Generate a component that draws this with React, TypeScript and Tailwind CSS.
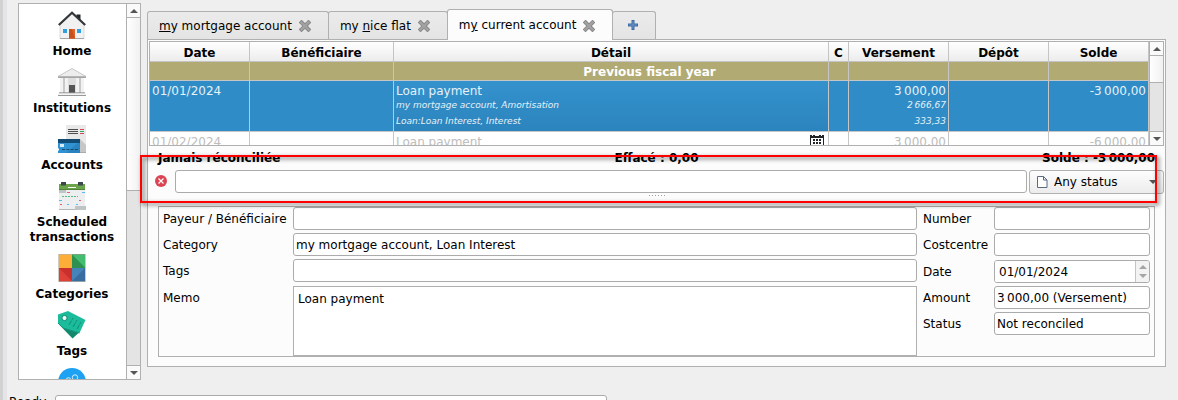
import type { ReactNode } from 'react';

const line = 'border-[#b0b0b0]';
const field =
  'block h-[23px] w-full min-w-0 rounded-[3px] border border-[#ababab] bg-white px-[2px] text-[12px] leading-[15px] text-black outline-none';

function HomeIcon() {
  return (
    <svg width="28" height="28" viewBox="0 0 28 28">
      <path d="M18.500 3.500h4v8h-4z" fill="#232629" />
      <path d="M2 13 14 2l12 11v14.500H2z" fill="#f1f1f1" stroke="#c8c8c8" strokeWidth=".6" />
      <path d="M2 27.500h24" stroke="#a5a5a5" />
      <path d="M.8 14 14 1.800 27.200 14" fill="none" stroke="#33373a" strokeWidth="2.200" />
      <path d="M5 18h4v4H5zM19 18h4v4h-4z" fill="#2f9fe0" />
      <path d="M11 18h6v9.500h-6z" fill="#e0652a" />
      <path d="M11 18h3l3 9.500h-6z" fill="#c9501c" />
    </svg>
  );
}

function BankIcon() {
  return (
    <svg width="28" height="28" viewBox="0 0 28 28">
      <path d="M2 9h24v16H2z" fill="#c9c9c9" />
      <path d="M0 8.500 14 .5l14 8z" fill="#ededed" stroke="#bdbdbd" strokeWidth=".8" />
      <path d="M0 8.500h28v1.500H0z" fill="#a6a6a6" />
      <path d="M2 10h3v15H2zM7 10h3v15H7zM18 10h3v15h-3zM23 10h3v15h-3z" fill="#f2f2f2" />
      <path d="M10 10h8v15h-8z" fill="#dedede" />
      <path d="M11 17h6v8h-6z" fill="#555" />
      <path d="M0 25h28v3H0z" fill="#f4f4f4" />
      <path d="M0 27.500h28M1 24.800h26" stroke="#8d8d8d" strokeWidth=".9" />
    </svg>
  );
}

function AccountsIcon() {
  return (
    <svg width="28" height="28" viewBox="0 0 28 28">
      <path d="M8 0h20v28H8z" fill="#e9e9e9" />
      <path d="M22 14 28 20v8h-6z" fill="#c6c6c6" />
      <path d="M8 27.500h20" stroke="#aaa" />
      <path d="M10 4.500h10M10 6.500h10M10 8.500h10" stroke="#4d4d4d" />
      <path d="M22 4.500h4M22 8.500h4" stroke="#da4453" />
      <path d="M22 6.500h4" stroke="#27ae60" />
      <path d="M0 14h22v14H0z" fill="#2f93d3" />
      <path d="M8 28 22 16v12z" fill="#2a82bf" />
      <path d="M0 14h22v4H0z" fill="#124a73" />
      <path d="M2 19h4v3H2z" fill="#d7eaf5" />
      <path d="M4 24.500h16" stroke="#124a73" strokeDasharray="3 1.300" />
      <path d="M0 23.500v2" stroke="#fff" strokeWidth="2" />
    </svg>
  );
}

function ScheduleIcon() {
  return (
    <svg width="28" height="28" viewBox="0 0 28 28">
      <path d="M1 6h26v22H1z" fill="#eceeef" />
      <path d="M1 27.500h26" stroke="#b5b7b8" />
      <path d="M1 2h26v6H1z" fill="#6ba44b" />
      <path d="M1 7.500h26" stroke="#4f8436" />
      <path d="M10 5.500h8" stroke="#f4f9f1" />
      <path d="M3 0h5v3.500H3zM20 0h5v3.500h-5z" fill="#3c464d" />
      <path d="M1 8h7v3H1zM17 24h11v4H17z" fill="#bfc4c7" />
      <path d="M9 10.500h3M21 18.500h2M2 22.500h2" stroke="#e4606c" />
      <path d="M4 14.500h16" stroke="#51bd80" strokeDasharray="2 1" />
      <path d="M24 10.500h3M1 18.500h3M9 22.500h2M18 22.500h2" stroke="#5bb9ef" />
    </svg>
  );
}

function CategoriesIcon() {
  return (
    <svg width="28" height="28" viewBox="0 0 28 28">
      <path d="M1 .5h13v14H1z" fill="#fdae38" />
      <path d="M14 .5h13v14H14z" fill="#2f9150" />
      <path d="M14 .5h13v13z" fill="#45bd70" />
      <path d="M1 14h13v13.500H1z" fill="#c9302c" />
      <path d="M1 14 14 27H1z" fill="#dd4138" />
      <path d="M14 14h13v13.500H14z" fill="#386da0" />
      <path d="M14 14h13L14 27z" fill="#4484bb" />
      <path d="M.5.500h27v27H.5z" fill="none" stroke="#8a7a60" strokeOpacity=".4" />
    </svg>
  );
}

function TagsIcon() {
  return (
    <svg width="28" height="28" viewBox="0 0 28 28">
      <path d="M1 13.500 5 16l16 5.500-6.500 6z" fill="#12896d" />
      <path d="M0 3.500 10 0l17.500 9-6 13L5 17 0 12z" fill="#1abc9c" />
      <path d="m0 12 5 5 16.500 5" fill="none" stroke="#14967b" />
      <circle cx="6.500" cy="7" r="2.600" fill="#eefaf7" stroke="#12896d" />
      <path d="m11 14 4-7M15 16l4-7M19 18l4-7" stroke="#108068" strokeWidth=".8" strokeDasharray="5 1" />
    </svg>
  );
}

function PayeesIcon() {
  return (
    <svg width="28" height="28" viewBox="0 0 28 28">
      <circle cx="14" cy="14" r="14" fill="#1da1f2" />
      <circle cx="17" cy="9.500" r="2.700" fill="none" stroke="#d8f0ff" />
      <circle cx="10.500" cy="12" r="2.300" fill="none" stroke="#d8f0ff" />
      <path d="M12 18c0-4 10-6 11 0" fill="none" stroke="#d8f0ff" />
    </svg>
  );
}

function Arrow({ up = false, color = '#555' }: { up?: boolean; color?: string }) {
  return (
    <svg width="8" height="4" viewBox="0 0 8 4" className="shrink-0">
      <path d={up ? 'M0 4 4 0l4 4z' : 'M0 0h8L4 4z'} fill={color} />
    </svg>
  );
}

function ScrollBar({ thumb }: { thumb: string }) {
  return (
    <div className={`flex w-[14px] shrink-0 flex-col border-l bg-[#e4e4e4] ${line}`}>
      <button aria-label="Scroll up" className={`flex h-[14px] shrink-0 items-center justify-center border-b bg-[#fafafa] ${line}`}>
        <Arrow up />
      </button>
      <div className={`border-b bg-linear-to-r from-white to-[#f1f1f1] ${thumb} ${line}`} />
      <div className="flex-1" />
      <button aria-label="Scroll down" className={`flex h-[14px] shrink-0 items-center justify-center border-t bg-[#fafafa] ${line}`}>
        <Arrow />
      </button>
    </div>
  );
}

const views: { label: string; icon: ReactNode }[] = [
  { label: 'Home', icon: <HomeIcon /> },
  { label: 'Institutions', icon: <BankIcon /> },
  { label: 'Accounts', icon: <AccountsIcon /> },
  { label: 'Scheduled transactions', icon: <ScheduleIcon /> },
  { label: 'Categories', icon: <CategoriesIcon /> },
  { label: 'Tags', icon: <TagsIcon /> },
];

function Sidebar() {
  return (
    <nav className={`flex h-[377px] w-[123px] shrink-0 overflow-hidden border bg-white ${line}`}>
      <div className="flex min-w-0 flex-1 flex-col gap-[9px] pt-[7px] pr-px">
        {views.map((v) => (
          <button key={v.label} className="flex shrink-0 flex-col items-center gap-[5px] text-center font-bold">
            {v.icon}
            <span>{v.label}</span>
          </button>
        ))}
        <button aria-label="Payees" className="flex shrink-0 justify-center">
          <PayeesIcon />
        </button>
      </div>
      <ScrollBar thumb="h-[173px]" />
    </nav>
  );
}

function Tab({ children, active = false }: { children: ReactNode; active?: boolean }) {
  return (
    <div
      className={`-ml-px flex items-center gap-[7px] rounded-t-[3px] border border-b-0 pr-[17px] pl-[11px] ${line} ${
        active ? 'relative -mb-px h-[31px] bg-[#fcfcfc] pt-px' : 'h-[28px] bg-linear-to-b from-[#ebebeb] to-[#e4e4e4] pt-px'
      }`}
    >
      <button role="tab" aria-selected={active} className="whitespace-nowrap">
        {children}
      </button>
      <button aria-label="Close tab">
        <svg width="12" height="12" viewBox="0 0 12 12" className="block">
          <path d="m2.500 2.500 7 7m0-7-7 7" stroke="#858585" strokeWidth="4" strokeLinecap="square" />
          <path d="m2.500 2.500 7 7m0-7-7 7" stroke="#a2a2a2" strokeWidth="2.400" strokeLinecap="square" />
        </svg>
      </button>
    </div>
  );
}

function CalendarIcon() {
  return (
    <svg width="14" height="14" viewBox="0 0 14 14" className="block">
      <path d="M0 1h14v13H0z" fill="#232629" />
      <path d="M1 4h12v10H1z" fill="#fff" />
      <path d="M2 0h1v2H2zM11 0h1v2h-1zM5 0h4v2H5z" fill="#fff" />
      <path d="M3 5h2v2H3zM6 5h2v2H6zM9 5h2v2H9zM3 8h2v2H3zM6 8h2v2H6zM9 8h2v2H9z" fill="#232629" />
    </svg>
  );
}

const th = 'h-[20px] border-r border-b border-[#c4c4c4] bg-linear-to-b from-white to-[#ececec] p-0 pt-[3px] text-center font-bold leading-[15px]';
const fiscal = 'h-[19px] border-r border-b border-[#c6c6c6] bg-[#b1aa73] p-0';
const sel = 'h-[51px] border-r border-b border-[#c6c6c6] bg-[#308cc6] p-0 px-[2px] pt-px align-top text-[#e6f1f8] leading-[18px]';
const next = 'h-[20px] border-r border-[#c6c6c6] bg-white p-0 px-[2px] pt-px align-top text-[#bdbdbd] leading-[19px]';
const split = 'block text-[9px] leading-[10px] italic';
const split2 = 'mt-[6px] block text-[9px] leading-[10px] italic';

function Ledger() {
  return (
    <div className={`flex h-[105px] overflow-hidden border bg-white ${line}`}>
      <div className="min-w-0 flex-1">
        <table className="w-full table-fixed border-separate border-spacing-0">
          <colgroup>
            <col className="w-[100px]" />
            <col className="w-[144px]" />
            <col />
            <col className="w-[20px]" />
            <col className="w-[100px]" />
            <col className="w-[100px]" />
            <col className="w-[100px]" />
          </colgroup>
          <thead>
            <tr>
              {['Date', 'Bénéficiaire', 'Détail', 'C', 'Versement', 'Dépôt', 'Solde'].map((h) => (
                <th key={h} className={th}>
                  {h}
                </th>
              ))}
            </tr>
          </thead>
          <tbody>
            <tr>
              <td className={fiscal} />
              <td className={fiscal} />
              <td className={`${fiscal} text-center font-bold text-white`}>
                <span className="block pt-[2px] pl-[77px]">Previous fiscal year</span>
              </td>
              <td className={fiscal} />
              <td className={fiscal} />
              <td className={fiscal} />
              <td className={fiscal} />
            </tr>
            <tr>
              <td className={sel}>01/01/2024</td>
              <td className={sel} />
              <td className={`${sel} bg-linear-to-b from-[#3492cd] to-[#2c84bd]`}>
                Loan payment
                <span className={split}>my mortgage account, Amortisation</span>
                <span className={split2}>Loan:Loan Interest, Interest</span>
              </td>
              <td className={sel} />
              <td className={`${sel} text-right`}>
                {'3\u202f000,00'}
                <span className={split}>{'2\u202f666,67'}</span>
                <span className={split2}>333,33</span>
              </td>
              <td className={sel} />
              <td className={`${sel} text-right`}>{'-3\u202f000,00'}</td>
            </tr>
            <tr>
              <td className={next}>01/02/2024</td>
              <td className={next} />
              <td className={next}>
                <div className="flex items-start justify-between pr-[2px]">
                  <span>Loan payment</span>
                  <span className="pt-px">
                    <CalendarIcon />
                  </span>
                </div>
              </td>
              <td className={next} />
              <td className={`${next} text-right`}>{'3\u202f000,00'}</td>
              <td className={next} />
              <td className={`${next} text-right`}>{'-6\u202f000,00'}</td>
            </tr>
          </tbody>
        </table>
      </div>
      <ScrollBar thumb="h-[27px]" />
    </div>
  );
}

function SearchRow() {
  return (
    <div className="flex items-start pl-[6px]">
      <button aria-label="Clear filter" className="shrink-0 pt-[5px]">
        <svg width="12" height="12" viewBox="0 0 12 12" className="block">
          <circle cx="6" cy="6" r="6" fill="#da4453" />
          <path d="m3.500 3.500 5 5m0-5-5 5" stroke="#fff" strokeWidth="1.200" />
        </svg>
      </button>
      <div className="min-w-0 flex-1 pr-[2px] pl-[8px]">
        <input aria-label="Filter" className={field} />
      </div>
      <div className="relative w-[135px] shrink-0">
        <select
          aria-label="Status filter"
          className={`block h-[24px] w-full appearance-none rounded-[3px] border bg-linear-to-b from-[#fdfdfd] to-[#ececec] pt-px pl-[24px] text-[12px] text-black ${line}`}
        >
          <option>Any status</option>
        </select>
        <svg width="11" height="12" viewBox="0 0 11 12" className="pointer-events-none absolute top-[6px] left-[8px]">
          <path d="M.5.500h6l3.500 3.500v7.500H.5zM6.500.500V4H10" fill="#fff" stroke="#5a6b80" />
        </svg>
        <span className="pointer-events-none absolute top-[10px] right-[7px] flex">
          <Arrow />
        </span>
      </div>
    </div>
  );
}

const label = 'h-[23px] leading-[25px] whitespace-nowrap';

function Details() {
  return (
    <div className={`mr-[9px] ml-[9px] flex gap-[6px] border pr-[4px] pl-[4px] ${line}`}>
      <div className="grid min-w-0 flex-1 grid-cols-[130px_1fr] gap-y-[3px]">
        <label htmlFor="payee" className={label}>Payeur / Bénéficiaire</label>
        <input id="payee" className={field} />
        <label htmlFor="category" className={label}>Category</label>
        <input id="category" className={field} defaultValue="my mortgage account, Loan Interest" />
        <label htmlFor="tags" className={label}>Tags</label>
        <input id="tags" className={field} />
        <label htmlFor="memo" className={`pt-px ${label}`}>Memo</label>
        <textarea
          id="memo"
          className={`mt-px block h-[70px] w-full resize-none border bg-white px-[4px] py-[5px] text-[12px] leading-[15px] text-black outline-none ${line}`}
          defaultValue="Loan payment"
        />
      </div>
      <div className="grid w-[227px] shrink-0 grid-cols-[71px_1fr] content-start gap-y-[3px]">
        <label htmlFor="number" className={label}>Number</label>
        <input id="number" className={field} />
        <label htmlFor="costcentre" className={label}>Costcentre</label>
        <input id="costcentre" className={field} />
        <label htmlFor="date" className={`pt-px ${label}`}>Date</label>
        <div className="mt-px flex h-[23px] overflow-hidden rounded-[3px] border border-[#ababab] bg-white">
          <input id="date" className="min-w-0 flex-1 bg-white px-[4px] pt-px text-[12px] text-black outline-none" defaultValue="01/01/2024" />
          <div className="flex w-[14px] shrink-0 flex-col border-l border-[#c4c4c4] bg-[#f3f3f3]">
            <button aria-label="Next day" className="flex flex-1 items-center justify-center pt-px">
              <Arrow up color="#a5a5a5" />
            </button>
            <button aria-label="Previous day" className="flex flex-1 items-center justify-center pb-px">
              <Arrow color="#a5a5a5" />
            </button>
          </div>
        </div>
        <label htmlFor="amount" className={label}>Amount</label>
        <input id="amount" className={field} defaultValue={'3\u202f000,00 (Versement)'} />
        <label htmlFor="status" className={label}>Status</label>
        <input id="status" className={field} defaultValue="Not reconciled" />
      </div>
    </div>
  );
}

export default function App() {
  return (
    <div className="flex h-screen overflow-hidden bg-[#efefef] font-['DejaVu_Sans',sans-serif] text-[12px] leading-[15px] text-black">
      <div className="w-[3px] shrink-0 bg-[#d2d2d2]" />
      <div className="w-[4px] shrink-0 bg-[#e5e5e9]" />
      <div className="flex min-w-0 flex-1 flex-col">
        <div className="flex shrink-0 items-start gap-[6px] pt-[3px] pr-[12px] pl-[11px]">
          <Sidebar />
          <main className="min-w-0 flex-1 pt-[6px]">
            <div role="tablist" className="flex h-[30px] items-end pl-px">
              <Tab>
                <u>m</u>y mortgage account
              </Tab>
              <Tab>
                my <u>n</u>ice flat
              </Tab>
              <Tab active>
                m<u>y</u> current account
              </Tab>
              <button
                aria-label="New tab"
                className={`-ml-px flex h-[28px] w-[44px] items-center justify-center rounded-t-[3px] border border-b-0 bg-linear-to-b from-[#ebebeb] to-[#e4e4e4] pr-[2px] pb-[2px] ${line}`}
              >
                <svg width="10" height="10" viewBox="0 0 10 10">
                  <path d="M3.500 0h3v3.500H10v3H6.500V10h-3V6.500H0v-3h3.500z" fill="#3c68a5" />
                  <path d="M4.500 1h1v3.500H9v1H5.500V9h-1V5.500H1v-1h3.500z" fill="#6c93c8" />
                </svg>
              </button>
            </div>
            <section className={`border bg-[#fcfcfc] p-px pb-[9px] ${line}`}>
              <Ledger />
              <div className="relative">
                <div className="grid h-[24px] grid-cols-3 items-center pr-[9px] pl-[9px] font-bold whitespace-nowrap">
                  <span>Jamais réconciliée</span>
                  <span className="text-center">Effacé : 0,00</span>
                  <span className="text-right">{'Solde : -3\u202f000,00'}</span>
                </div>
                <SearchRow />
                <div className="flex h-[12px] items-start justify-center gap-[2px] pt-px">
                  {[0, 1, 2, 3, 4, 5].map((i) => (
                    <span key={i} className="size-px bg-[#a0a0a0]" />
                  ))}
                </div>
                <div className="pointer-events-none absolute top-[9px] right-[7px] -left-[9px] h-[48px] border-2 border-[#fe0000] [filter:drop-shadow(2px_2px_2px_rgba(0,0,0,0.6))]" />
              </div>
              <Details />
            </section>
          </main>
        </div>
        <footer className="mt-[15px] flex shrink-0 items-start pl-[2px]">
          <label htmlFor="progress" className="w-[46px]">Ready.</label>
          <input id="progress" readOnly className="h-[20px] w-[552px] rounded-[3px] border border-[#ababab] bg-white" />
        </footer>
      </div>
    </div>
  );
}
